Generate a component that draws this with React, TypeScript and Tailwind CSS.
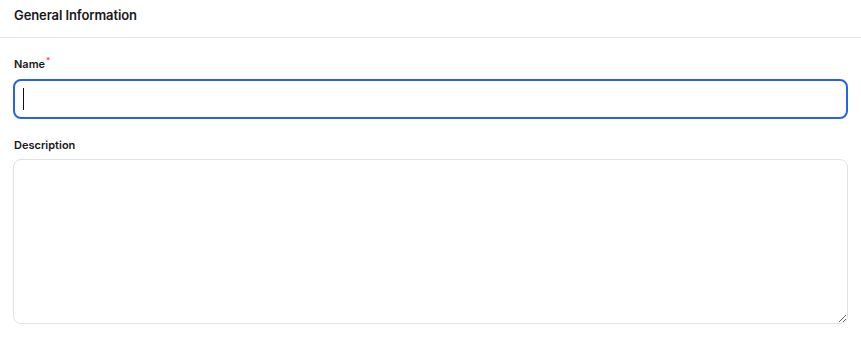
import React from 'react';

export default function App() {
  return (
    <main className="min-h-screen w-full bg-white font-['Inter',sans-serif] text-[#18181b]">
      <header className="flex h-[38px] items-start border-b border-[#e6e6e6] px-[14px] pt-[6px]">
        <h2 className="text-[13px] leading-[18px] font-semibold tracking-[-0.1px]">General Information</h2>
      </header>

      <section className="flex flex-col px-[13px] pt-[18px]">
        <label htmlFor="name" className="flex h-4 items-center pl-px text-[11px] font-semibold">
          Name<span className="-mt-2 ml-px text-[8px] text-[#ef4444]">*</span>
        </label>
        <div className="relative mt-[7px]">
          <input
            id="name"
            autoFocus
            className="h-10 w-full rounded-lg border-2 border-[#2563eb] px-2 text-base caret-transparent outline-none"
          />
          <span className="pointer-events-none absolute left-[10px] top-[9px] h-[22px] w-px bg-[#111]" />
        </div>

        <label htmlFor="description" className="mt-[18px] flex h-4 items-center pl-px text-[11px] font-semibold">
          Description
        </label>
        <textarea
          id="description"
          className="mt-[6px] h-[165px] w-full rounded-lg border border-[#e2e2e2] px-2 py-2 text-sm outline-none"
        />
      </section>
    </main>
  );
}
